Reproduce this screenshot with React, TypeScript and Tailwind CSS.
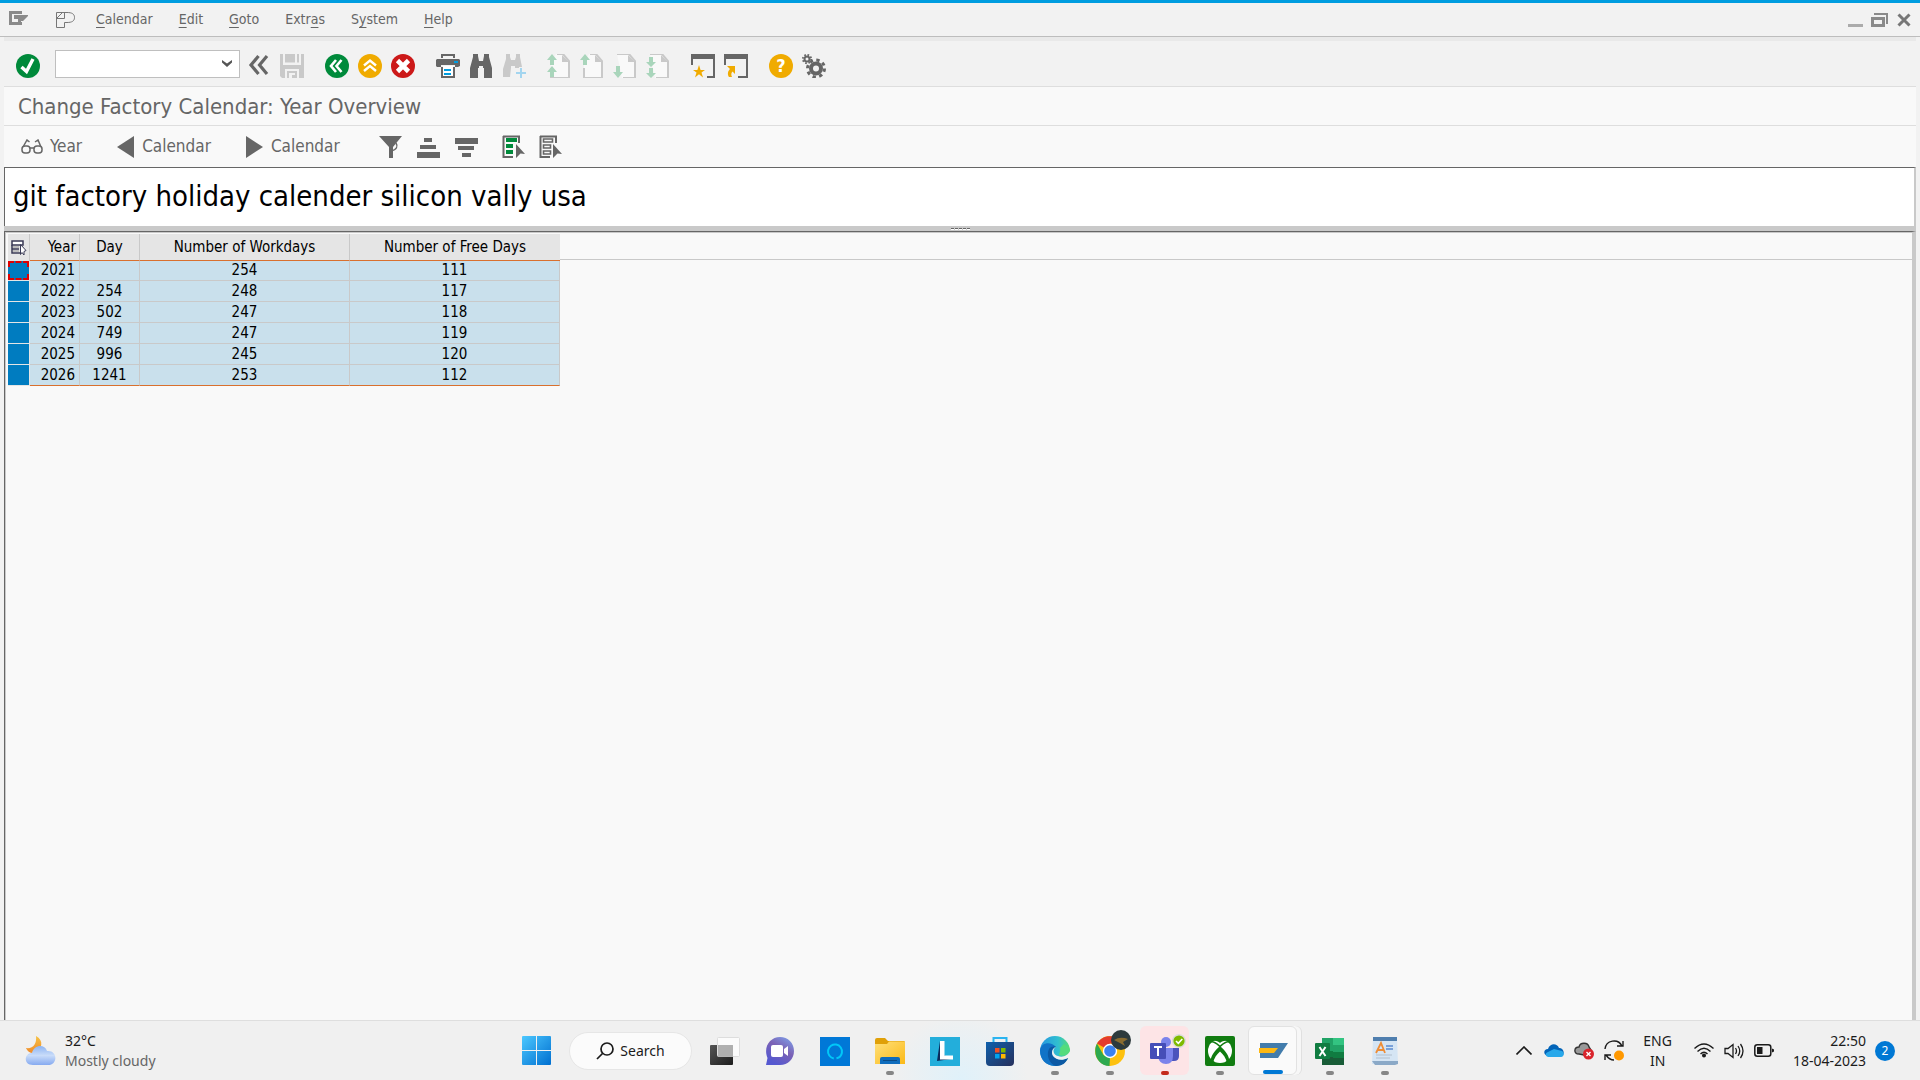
import type { ReactNode } from "react";

const G = "#666666";

type BtnProps = { label: string; children: ReactNode; disabled?: boolean };

function ToolButton({ label, children, disabled }: BtnProps) {
  return (
    <button type="button" aria-label={label} disabled={disabled} className="flex h-6 w-6 shrink-0 items-center justify-center">
      {children}
    </button>
  );
}

function Icon({ children, size = 24 }: { children: ReactNode; size?: number }) {
  return (
    <svg width={size} height={size} viewBox="0 0 24 24" fill="none" aria-hidden="true">
      {children}
    </svg>
  );
}

const menus: [string, string, string][] = [
  ["", "C", "alendar"],
  ["", "E", "dit"],
  ["", "G", "oto"],
  ["Extr", "a", "s"],
  ["S", "y", "stem"],
  ["", "H", "elp"],
];

function MenuBar() {
  return (
    <header className="flex h-[37px] shrink-0 items-center border-t-3 border-b border-t-[#009de0] border-b-[#bdbdbd] bg-[#f2f2f2] pl-2 pr-2 text-[14px] text-[#666]">
      <button type="button" aria-label="Window menu" className="mb-1">
        <svg width="20" height="16" viewBox="0 0 20 16" aria-hidden="true">
          <path d="M1 1H14V4H4V12H14V15H1Z" fill="#8a8a8a" />
          <path d="M6 5H20V6L15 11H13V12H10V9H6Z" fill="#8a8a8a" />
        </svg>
      </button>
      <button type="button" aria-label="Personal menu" className="ml-[27px] mr-5">
        <svg width="21" height="18" viewBox="0 0 21 18" fill="none" stroke="#777" aria-hidden="true">
          <path d="M1.5 1.5H12C17 1.5 19.5 3 19.5 6.500S17 11.500 12 11.500H9.500V16.500H1.500Z M9.500 1.500V7.500H1.500L7.500 1.500" />
        </svg>
      </button>
      <nav className="flex gap-[26px]">
        {menus.map(([a, u, b]) => (
          <button type="button" key={a + u + b}>
            {a}
            <span className="underline underline-offset-3">{u}</span>
            {b}
          </button>
        ))}
      </nav>
      <div className="ml-auto flex items-center gap-2">
        <button type="button" aria-label="Minimize">
          <svg width="15" height="16" viewBox="0 0 15 16" aria-hidden="true"><path d="M0 12H15V15H0Z" fill="#ababab" /></svg>
        </button>
        <button type="button" aria-label="Restore">
          <svg width="18" height="16" viewBox="0 0 18 16" aria-hidden="true">
            <path d="M3 1H17V12H15V3H3Z" fill="#8a8a8a" />
            <path d="M1.500 6.500H12.500V13.500H1.500Z" fill="none" stroke="#8a8a8a" strokeWidth="3" />
          </svg>
        </button>
        <button type="button" aria-label="Close">
          <svg width="15" height="16" viewBox="0 0 15 16" aria-hidden="true"><path d="M1.500 2.500L12.500 13.500M12.500 2.500L1.500 13.500" stroke="#777" strokeWidth="3" /></svg>
        </button>
      </div>
    </header>
  );
}

const pageButtons: [string, string][] = [
  ["First page", "M5 0L10 6H7V11H3V6H0ZM5 12L10 18H7V23H3V18H0Z"],
  ["Previous page", "M5 0L10 6H7V11H3V6H0Z"],
  ["Next page", "M5 24L10 18H7V12H3V18H0Z"],
  ["Last page", "M5 13L10 8H7V3H3V8H0ZM5 24L10 19H7V14H3V19H0Z"],
];

function StandardToolbar() {
  return (
    <div className="flex h-[45px] shrink-0 items-center gap-[21px] bg-[#f2f2f2] pl-3 pt-1">
      <div className="flex items-center gap-[7px]">
        <ToolButton label="Enter">
          <Icon><circle cx="12" cy="12" r="12" fill="#008a3b" /><path d="M5.500 13L10.500 17.500L17 5" stroke="#fff" strokeWidth="3.400" /></Icon>
        </ToolButton>
        <div className="relative mb-1 ml-2 flex">
          <select aria-label="Command" className="h-7 w-[185px] appearance-none border border-[#bfbfbf] bg-white text-sm" />
          <svg width="10" height="8" viewBox="0 0 10 8" className="pointer-events-none absolute right-2 top-2.5" aria-hidden="true"><path d="M0 0L5 3.500L10 0V2.500L5 7L0 2.500Z" fill="#555" /></svg>
        </div>
        <div className="flex gap-[9px]">
          <ToolButton label="Hide command field">
            <Icon><path d="M11.500 2L4 11L11.500 20M20 2L12.500 11L20 20" stroke={G} strokeWidth="3.200" /></Icon>
          </ToolButton>
          <ToolButton label="Save" disabled>
            <Icon><path d="M0 0H3V11H21V0H24V24H19V15H5V24H2L0 22Z" fill="#c9c9c9" /><path d="M5 0H15V8.500H5ZM17 0H19V8.500H17ZM7 17H17V24H7Z" fill="#c9c9c9" /><path d="M9 19H15V21H12V24H9Z" fill="#f2f2f2" /></Icon>
          </ToolButton>
        </div>
      </div>
      <div className="flex gap-[9px]">
        <ToolButton label="Back">
          <Icon><circle cx="12" cy="12" r="12" fill="#008a3b" /><path d="M11 6L6 12L11 18M16.500 6L11.500 12L16.500 18" stroke="#fff" strokeWidth="2.600" /></Icon>
        </ToolButton>
        <ToolButton label="Exit">
          <Icon><circle cx="12" cy="12" r="12" fill="#f0ab00" /><path d="M6 11.500L12 6.500L18 11.500M6 17L12 12L18 17" stroke="#fff" strokeWidth="2.400" /></Icon>
        </ToolButton>
        <ToolButton label="Cancel">
          <Icon><circle cx="12" cy="12" r="12" fill="#cc1919" /><path d="M6.500 6.500L17.500 17.500M17.500 6.500L6.500 17.500" stroke="#fff" strokeWidth="4.600" /></Icon>
        </ToolButton>
      </div>
      <div className="flex gap-[9px]">
        <ToolButton label="Print">
          <Icon><path d="M5 0H19V4H17V2H7V4H5ZM1 5H23L24 6V12L22 13H19V11H5V13H1L0 12V6Z" fill={G} /><path d="M5 13H7V22H17V13H19V24H5Z" fill={G} /><path d="M7 12H17V22H7Z" fill="#fff" /><path d="M18 7H22V9H18ZM8 15H15V17H8ZM8 19H15V21H8Z" fill="#009de0" /></Icon>
        </ToolButton>
        <ToolButton label="Find">
          <Icon><path d="M4 0H9V2L10 7H14L15 2V0H20V3L23 14V24H15V14H14V12H10V14H9V24H1V14L4 3Z" fill={G} /></Icon>
        </ToolButton>
        <ToolButton label="Find next" disabled>
          <Icon><path d="M4 0H8V3L9 6H13L14 3V0H18V3L20 13H17V14H13V12H9V14L8 23H1V15L4 5Z" fill="#c9c9c9" /><path d="M19 14V24M14 19H24" stroke="#a3d5ef" strokeWidth="2" /></Icon>
        </ToolButton>
      </div>
      <div className="flex gap-[9px]">
        {pageButtons.map(([label, arrows], i) => (
          <ToolButton key={label} label={label} disabled>
            <Icon>
              <path d={i < 2 ? "M9 0H16L22 7V24H4V9Z" : "M4 0H16L22 7V24H9Z"} fill="#f9f9f9" />
              <path d={i < 2 ? "M10 0H16L22 7V24H4V14" : "M4 0H16L22 7V24H10"} stroke="#c9c9c9" strokeWidth="2" />
              <path d="M15 1V8H22Z" fill="#c9c9c9" />
              <path d={arrows} fill="#a9d5bb" />
            </Icon>
          </ToolButton>
        ))}
      </div>
      <div className="flex gap-[9px]">
        <ToolButton label="New window">
          <Icon><path d="M0 0H24V24H16V22H22V5H2V11H0Z" fill={G} /><path d="M8 11L9.600 16H14L10.500 18.500L12 23.500L8 20.300L4 23.500L5.500 18.500L2 16H6.400Z" fill="#f0ab00" /></Icon>
        </ToolButton>
        <ToolButton label="Create shortcut">
          <Icon><path d="M0 0H24V24H14V22H22V5H2V11H0Z" fill={G} /><path d="M3 12H11V20L8.500 17.500C7 19 7 21 8 23H5C3 20 4 17 6 15Z" fill="#f0ab00" /></Icon>
        </ToolButton>
      </div>
      <div className="flex gap-[9px]">
        <ToolButton label="Help">
          <span className="flex h-6 w-6 items-center justify-center rounded-full bg-[#f0ab00] text-[18px] font-bold text-white">?</span>
        </ToolButton>
        <ToolButton label="Customize layout">
          <Icon>
            <circle cx="14" cy="14.500" r="5" stroke={G} strokeWidth="4" />
            <circle cx="14" cy="14.500" r="8.500" stroke={G} strokeWidth="3" strokeDasharray="3.340 3.340" />
            <circle cx="5" cy="5" r="2.500" stroke={G} strokeWidth="2" />
            <circle cx="5" cy="5" r="4.200" stroke={G} strokeWidth="1.800" strokeDasharray="1.650 1.650" />
          </Icon>
        </ToolButton>
      </div>
    </div>
  );
}

function ListSelectIcon({ filled }: { filled: boolean }) {
  return (
    <Icon>
      <path d="M1.500 1V22H11M1 1.500H17V8" stroke={G} strokeWidth="2" />
      {filled ? (
        <path d="M4 3H15V7H4ZM4 9H11V13H4ZM4 15H11V19H4Z" fill="#008a3b" />
      ) : (
        <path d="M4.500 4H13.500V7H4.500ZM4.500 10H11.500V13H4.500ZM4.500 16H11.500V19H4.500Z" stroke={G} strokeWidth="1.600" />
      )}
      <path d="M14 9L23 19L18.500 18.500L14 23Z" fill={G} />
    </Icon>
  );
}

function ApplicationToolbar() {
  return (
    <div className="flex h-[41px] shrink-0 items-center bg-[#f9f9f9] pl-[17px] text-[17px] text-[#666]">
      <button type="button" className="flex items-center gap-[7px]">
        <svg width="22" height="16" viewBox="0 0 22 16" fill="none" stroke={G} strokeWidth="1.500" aria-hidden="true">
          <rect x="1" y="7" width="8" height="7" rx="3" /><rect x="13" y="7" width="8" height="7" rx="3" />
          <path d="M9 9H13M2 8L6 1L8.500 3M20 8L17 1L14 3" />
        </svg>
        Year
      </button>
      <button type="button" className="ml-[35px] flex items-center gap-[8px]">
        <svg width="17" height="22" viewBox="0 0 17 22" aria-hidden="true"><path d="M17 0V22L0 11Z" fill={G} /></svg>
        Calendar
      </button>
      <button type="button" className="ml-[35px] flex items-center gap-[8px]">
        <svg width="17" height="22" viewBox="0 0 17 22" aria-hidden="true"><path d="M0 0V22L17 11Z" fill={G} /></svg>
        Calendar
      </button>
      <div className="ml-[38px] flex gap-[14px]">
        <ToolButton label="Filter"><Icon><path d="M1 1H24L15 12V23H11V12Z" fill={G} /><path d="M13 16C19 15 20 11 18 8" stroke={G} strokeWidth="1.400" /></Icon></ToolButton>
        <ToolButton label="Sort ascending"><Icon><path d="M8 3H16V7H8ZM4 10H20V14H4ZM1 17H24V23H1Z" fill={G} /></Icon></ToolButton>
        <ToolButton label="Sort descending"><Icon><path d="M1 3H24V9H1ZM4 11H20V15H4ZM8 18H17V22H8Z" fill={G} /></Icon></ToolButton>
      </div>
      <div className="ml-[24px] flex gap-[13px]">
        <ToolButton label="Select all"><ListSelectIcon filled /></ToolButton>
        <ToolButton label="Deselect all"><ListSelectIcon filled={false} /></ToolButton>
      </div>
    </div>
  );
}

const rows = [
  ["2021", "", "254", "111"],
  ["2022", "254", "248", "117"],
  ["2023", "502", "247", "118"],
  ["2024", "749", "247", "119"],
  ["2025", "996", "245", "120"],
  ["2026", "1241", "253", "112"],
];

function YearGrid() {
  return (
    <section className="min-h-0 flex-1 border-l border-r-4 border-t border-l-[#666] border-r-[#c9c9c9] border-t-[#666] bg-[#f9f9f9]">
      <div className="flex h-full items-start border-l border-t border-[#c9c9c9] pl-0.5 pt-px">
        <table className="w-[552px] shrink-0 table-fixed border-separate border-spacing-0 text-[15px] leading-none text-black">
          <colgroup>
            <col className="w-[22px]" /><col className="w-[50px]" /><col className="w-[60px]" /><col className="w-[210px]" /><col className="w-[210px]" />
          </colgroup>
          <thead>
            <tr className="h-[27px] bg-[#e5e5e5] [&>th]:p-0 [&>th]:font-normal">
              <th className="border-r border-[#c9c9c9]">
                <button type="button" aria-label="Select all rows" className="ml-[3px] flex">
                  <svg width="16" height="16" viewBox="0 0 16 16" fill="none" aria-hidden="true">
                    <path d="M1 1H12V5H1Z" fill="#fff" stroke="#3a3a55" strokeWidth="1.500" />
                    <path d="M2 6H8V8H2ZM2 10H8V12H2Z" fill="#bbb" />
                    <path d="M1 5V13H9M1 9H8" stroke="#3a3a55" strokeWidth="1.500" />
                    <path d="M9.500 4.500V14.500L11 12.500L13 15V11.500L15 10.500Z" fill="#fff" stroke="#3a3a55" />
                  </svg>
                </button>
              </th>
              <th className="border-b border-r border-b-[#d9702e] border-r-[#c9c9c9]"><span className="block pr-[3px] text-right">Year</span></th>
              <th className="border-b border-r border-b-[#d9702e] border-r-[#c9c9c9]">Day</th>
              <th className="border-b border-r border-b-[#d9702e] border-r-[#c9c9c9]">Number of Workdays</th>
              <th className="border-b border-b-[#d9702e]">Number of Free Days</th>
            </tr>
          </thead>
          <tbody className="[&_td]:border-b [&_td]:border-r [&_td]:border-[#c9c9c9] [&_td]:bg-[#c9e0ec] [&_td]:p-0 [&_td]:text-center [&>tr:last-child>td]:border-b-[#d9702e]">
            {rows.map(([year, day, work, free], i) => (
              <tr key={year} className={i === 0 ? "h-5" : "h-[21px]"}>
                <th className="border-b border-r border-[#e5e5e5] bg-[#007cc0] p-0">
                  {i === 0 && <span className="block h-[19px] border-2 border-dashed border-[#e00000]" />}
                </th>
                <td>
                  <span className="block pr-1 text-right">{year}</span>
                </td>
                <td>{day}</td>
                <td>{work}</td>
                <td>{free}</td>
              </tr>
            ))}
          </tbody>
        </table>
        <div className="h-[26px] flex-1 border-b border-[#c9c9c9]" />
      </div>
    </section>
  );
}

function AppSvg({ children }: { children: ReactNode }) {
  return <svg width="30" height="30" viewBox="0 0 30 30" fill="none" aria-hidden="true">{children}</svg>;
}

type TaskbarApp = { name: string; icon: ReactNode; dot?: "gray" | "red" | "blue"; tile?: string };

const apps: TaskbarApp[] = [
  {
    name: "Task view",
    icon: <AppSvg><rect x="0" y="9" width="23" height="20" rx="1" fill="url(#tv)" /><rect x="7.500" y="1.500" width="22" height="19" rx="1" fill="#fff" fillOpacity=".7" stroke="#ddd" /><path d="M8 9H23V21H8Z" fill="#aaa" fillOpacity=".8" /></AppSvg>,
  },
  {
    name: "Chat",
    icon: <AppSvg><path d="M15 1C23 1 29 7 29 15S23 29 15 29H1L2.500 22C-2 11 5 1 15 1Z" fill="url(#chat)" /><rect x="6" y="9" width="12" height="12" rx="2" fill="#fff" /><path d="M19 13L23 10V20L19 17Z" fill="#fff" /></AppSvg>,
  },
  {
    name: "Alexa",
    icon: <AppSvg><path d="M0 1H30V30H0Z" fill="#0078d7" /><circle cx="15" cy="15.500" r="7" stroke="#00c8f8" strokeWidth="2" strokeDasharray="41 3" transform="rotate(100 15 15.500)" /></AppSvg>,
  },
  {
    name: "File Explorer",
    dot: "gray",
    icon: <AppSvg><path d="M0 4Q0 2 2 2H10L13 5H29Q30 5 30 7V20H0Z" fill="#e0a008" /><path d="M0 8H12L14 5.500H30V28H0Z" fill="url(#folder)" /><path d="M5 28V23Q5 21 7 21H23Q25 21 25 23V28Z" fill="#0f6cbd" /><path d="M8 24.500H22" stroke="#0a4a86" /></AppSvg>,
  },
  {
    name: "Lenovo Vantage",
    icon: <AppSvg><path d="M0 1H30V30H0Z" fill="#23aedb" /><path d="M10 5L7 25L21 23L12 18Z" fill="#0b2a5b" /><path d="M10 5H14.500V19.500H23V23.500H10Z" fill="#fff" /></AppSvg>,
  },
  {
    name: "Microsoft Store",
    icon: <AppSvg><path d="M8.500 7V2H21.500V7" stroke="#2ab4f0" strokeWidth="2" /><path d="M1 6H29V26Q29 30 25 30H5Q1 30 1 26Z" fill="url(#store)" /><path d="M10 12H14.500V16.500H10Z" fill="#f25022" /><path d="M16 12H20.500V16.500H16Z" fill="#7fba00" /><path d="M10 18H14.500V22.500H10Z" fill="#00a4ef" /><path d="M16 18H20.500V22.500H16Z" fill="#ffb900" /></AppSvg>,
  },
  {
    name: "Edge",
    dot: "gray",
    icon: <AppSvg><circle cx="15" cy="15" r="15" fill="url(#edge)" /><path d="M0 14C2 5 12 6 16 11C11 11 10 16 13 20C16 25 23 25 28 22C24 29 18 30 14 30C6 29 0 24 0 14Z" fill="#1173c7" /><path d="M9 13C6 19 9 28 16 30C22 30 26 27 28 22C22 25 16 24 13 20C11 17 12 13 16 11C13 10 10 11 9 13Z" fill="#0c59a4" /><path d="M16 11C12 13 13 19 18 20C23 22 28 19 30 15V22L28 22C22 25 16 24 13 20C11 17 12 12 16 11Z" fill="#f1f1f1" /><path d="M20 12C21 16 19 17 19 19C24 21 30 17 30 13L24 8Z" fill="#54dc7c" /></AppSvg>,
  },
  {
    name: "Chrome",
    dot: "gray",
    icon: (
      <span className="relative flex">
        <AppSvg><circle cx="15" cy="15" r="15" fill="#fdc10f" /><path d="M15 15L2 7.500C7 -1 20 -3 28 7.500H15Z" fill="#e33b2e" /><path d="M2 7.500L8.500 19L15 22L14.500 30C3 30 -3 17 2 7.500Z" fill="#2da94f" /><circle cx="15" cy="15" r="7.200" fill="#fff" /><circle cx="15" cy="15" r="5.800" fill="#3b82f0" /></AppSvg>
        <svg width="20" height="20" viewBox="0 0 20 20" className="absolute -right-1.5 -top-1.5" aria-hidden="true"><circle cx="10" cy="10" r="10" fill="#2d3a3c" /><path d="M3 10Q9 6 17 9L12 12L14 16L9 13Z" fill="#8a6c2f" /></svg>
      </span>
    ),
  },
  {
    name: "Teams",
    dot: "red",
    tile: "bg-[#fde4e6]",
    icon: (
      <span className="relative flex">
        <AppSvg><circle cx="16" cy="6" r="5" fill="#7b83eb" /><path d="M22 12H29V20Q29 25 24 25H20Z" fill="#4b53bc" /><path d="M8 12H23V20Q23 28 16 28T8 20Z" fill="#7b83eb" /><rect x="0" y="7" width="16" height="16" rx="1" fill="#464eb8" /><path d="M4 11H12M8 11V20" stroke="#fff" strokeWidth="2" /></AppSvg>
        <svg width="14" height="14" viewBox="0 0 14 14" className="absolute -right-1.5 -top-0.5" aria-hidden="true"><circle cx="7" cy="7" r="6.300" fill="#7fba00" stroke="#ddd" strokeWidth="1.400" /><path d="M4 7L6.300 9.300L10.300 5" fill="none" stroke="#fff" strokeWidth="1.600" /></svg>
      </span>
    ),
  },
  {
    name: "Xbox",
    dot: "gray",
    icon: <AppSvg><rect width="30" height="30" rx="2" fill="#107c10" /><circle cx="15" cy="15" r="12" fill="#fff" /><path d="M7 5C11 4 14 6 15 7C16 6 19 4 23 5L22 3H8ZM15 10C20 14 25 21 24 25L22 27C21 22 18 18 15 15.500C12 18 9 22 8 27L6 25C5 21 10 14 15 10Z" fill="#107c10" /><path d="M6 6C9 5 12 8 15 10.500C18 8 21 5 24 6" stroke="#107c10" strokeWidth="1.500" /></AppSvg>,
  },
  {
    name: "SAP Logon",
    dot: "blue",
    tile: "-ml-1 border border-[#e2e2e2] bg-[#fafafa] shadow-[4px_0_0_#f7f7f7,5px_0_0_#e0e0e0]",
    icon: <AppSvg><path d="M2 7H30L20 22H2Z" fill="#427cac" /><path d="M1 12H20L16 17H1Z" fill="#fdb813" /></AppSvg>,
  },
  {
    name: "Excel",
    dot: "gray",
    icon: <AppSvg><path d="M7 2H29V29H7Z" fill="#185c37" /><path d="M7 2H18V15H7Z" fill="#21a366" /><path d="M18 2H29V9H18Z" fill="#33c481" /><path d="M18 9H29V16H18Z" fill="#21a366" /><path d="M7 15H18V21H7ZM18 16H29V22H18Z" fill="#107c41" /><rect x="0" y="7" width="15" height="16" rx="1" fill="#107c41" /><path d="M4.500 11L10.500 20M10.500 11L4.500 20" stroke="#fff" strokeWidth="2" /></AppSvg>,
  },
  {
    name: "WordPad",
    dot: "gray",
    icon: <AppSvg><path d="M3 1H27L28 28H2Z" fill="#d5e5f4" /><path d="M3 1H27V5H3Z" fill="#4f7eae" /><path d="M2 25H28V28L25 29H5Z" fill="#8ba9c7" /><path d="M6 17L11 7L15 17M8 14H14" stroke="#ee8d36" strokeWidth="1.800" /><path d="M16 10H23M16 13H23" stroke="#5b8bd0" strokeWidth="1.500" /><path d="M6 19H22M6 22H20" stroke="#b2bfcd" /></AppSvg>,
  },
];

function Taskbar() {
  return (
    <footer className="grid h-[60px] shrink-0 grid-cols-[1fr_auto_1fr] items-center border-t border-[#dedede] bg-[#f0f0f0] bg-[radial-gradient(circle_at_50%_100%,#dff1fa_0,#f0f0f0_7%)] font-['Noto_Sans','Open_Sans',sans-serif] text-[14px] leading-5 text-[#1b1b1b]">
      <svg width="0" height="0" className="absolute" aria-hidden="true">
        <defs>
          <linearGradient id="win" x2="1" y2="1"><stop stopColor="#4cc8ff" /><stop offset="1" stopColor="#006fd0" /></linearGradient>
          <linearGradient id="tv" x2="1" y2="1"><stop stopColor="#555" /><stop offset="1" stopColor="#1c1c1c" /></linearGradient>
          <linearGradient id="chat" x1="1" x2=".4" y2="1"><stop stopColor="#7fa8f0" /><stop offset=".5" stopColor="#7b62b5" /><stop offset="1" stopColor="#5558d0" /></linearGradient>
          <linearGradient id="folder" x2="1" y2="1"><stop stopColor="#ffe07a" /><stop offset="1" stopColor="#fbb917" /></linearGradient>
          <linearGradient id="store" x2="1" y2="1"><stop stopColor="#0f60ac" /><stop offset="1" stopColor="#26305c" /></linearGradient>
          <linearGradient id="edge"><stop stopColor="#2695e0" /><stop offset=".6" stopColor="#30bfd0" /><stop offset="1" stopColor="#5ade70" /></linearGradient>
          <linearGradient id="cloud" x2="0" y2="1"><stop stopColor="#8db4f2" /><stop offset=".5" stopColor="#c9dcf9" /><stop offset="1" stopColor="#86aaf0" /></linearGradient>
          <linearGradient id="moon" x2="0" y2="1"><stop stopColor="#f6c244" /><stop offset="1" stopColor="#ef8b2c" /></linearGradient>
        </defs>
      </svg>
      <button type="button" className="flex items-center gap-[9px] pl-[25px] text-left">
        <svg width="31" height="30" viewBox="0 0 31 30" aria-hidden="true">
          <path d="M11 0C19 4 18 14 8 17C5 17 2 15 1 12C8 13 12 8 11 0Z" fill="url(#moon)" />
          <path d="M8 29C-2 29 -1 17 7 17C9 8 20 8 22 15C33 14 33 29 23 29Z" fill="url(#cloud)" />
        </svg>
        <span>32°C<br /><span className="text-[#666]">Mostly cloudy</span></span>
      </button>
      <div className="flex items-center pl-[14px]">
        <button type="button" aria-label="Start" className="mr-[18px]">
          <svg width="29" height="29" viewBox="0 0 29 29" aria-hidden="true"><path d="M0 1Q0 0 1 0H14V14H0ZM15 0H28Q29 0 29 1V14H15ZM0 15H14V29H1Q0 29 0 28ZM15 15H29V28Q29 29 28 29H15Z" fill="url(#win)" /></svg>
        </button>
        <button type="button" className="mr-[5px] flex h-[38px] w-[123px] items-center justify-center gap-[6px] rounded-full border border-[#e6e6e6] bg-[#fbfbfb]">
          <svg width="18" height="18" viewBox="0 0 18 18" fill="none" stroke="#1b1b1b" strokeWidth="1.700" aria-hidden="true"><circle cx="11" cy="7" r="6" /><path d="M6.500 11.500L1 17" /></svg>
          Search
        </button>
        {apps.map((a) => (
          <div key={a.name} className="flex w-[55px] justify-center">
            <button type="button" aria-label={a.name} className={"relative flex h-[49px] w-[49px] items-center justify-center rounded-md " + (a.tile ?? "")}>
              {a.icon}
              {a.dot === "gray" && <span className="absolute bottom-0 h-1 w-2 rounded-full bg-[#868686]" />}
              {a.dot === "red" && <span className="absolute bottom-0 h-1 w-2 rounded-full bg-[#c42b1c]" />}
              {a.dot === "blue" && <span className="absolute bottom-0 h-1 w-5 rounded-full bg-[#0078d4]" />}
            </button>
          </div>
        ))}
      </div>
      <div className="flex items-center justify-end pr-[25px]">
        <button type="button" aria-label="Show hidden icons" className="mr-3"><svg width="16" height="9" viewBox="0 0 16 9" fill="none" stroke="#1b1b1b" strokeWidth="1.600" aria-hidden="true"><path d="M.5 8.500L8 1L15.500 8.500" /></svg></button>
        <button type="button" aria-label="OneDrive" className="mr-[10px]"><svg width="20" height="13" viewBox="0 0 20 13" aria-hidden="true"><path d="M4 12C-1 11 -1 5 4 5C6 -1 13 -1 15 4C20 4 21 10 18 12Z" fill="#0364b8" /><path d="M4 13C1 12 1 9 4 8L10 5L18 7C21 9 20 13 17 13Z" fill="#28a8ea" /></svg></button>
        <button type="button" aria-label="Cloud sync error" className="mr-[10px]"><svg width="20" height="18" viewBox="0 0 20 18" aria-hidden="true"><path d="M5 12C-1 12 0 5 5 5C6 0 14 0 15 5L17 8L10 13Z" fill="#999" stroke="#333" strokeWidth="1.400" /><circle cx="14.500" cy="12" r="5.500" fill="#d9242c" /><path d="M12.500 10L16.500 14M16.500 10L12.500 14" stroke="#fff" strokeWidth="1.400" /></svg></button>
        <button type="button" aria-label="Windows Update" className="mr-[19px]"><svg width="20" height="21" viewBox="0 0 20 21" fill="none" aria-hidden="true"><path d="M1 9C2 0 14 -2 18 6M19 1V6H13M10 20C6 20 4 18 2 15M1 20V15H7" stroke="#1b1b1b" strokeWidth="1.400" /><circle cx="15" cy="15.500" r="5" fill="#ff9800" /></svg></button>
        <button type="button" className="mr-[22px] text-center">ENG<br />IN</button>
        <button type="button" aria-label="Network, volume and battery" className="mr-[19px] flex items-center gap-[10px]">
          <svg width="20" height="15" viewBox="0 0 20 15" fill="none" stroke="#1b1b1b" strokeWidth="1.400" aria-hidden="true"><path d="M.5 5.500Q10 -3.500 19.500 5.500M3.500 8.500Q10 2 16.500 8.500M6.500 11Q10 7.500 13.500 11" /><circle cx="10" cy="12.500" r="1.300" fill="#1b1b1b" /></svg>
          <svg width="20" height="16" viewBox="0 0 20 16" fill="none" stroke="#1b1b1b" strokeWidth="1.300" aria-hidden="true"><path d="M1 5.500H4L9 1.500V14.500L4 10.500H1ZM11.500 5Q13.500 8 11.500 11M14 3Q17.500 8 14 13M16.500 1Q21.500 8 16.500 15" /></svg>
          <svg width="20" height="13" viewBox="0 0 20 13" fill="none" aria-hidden="true"><rect x=".8" y=".8" width="16" height="11.400" rx="2.500" stroke="#1b1b1b" strokeWidth="1.500" /><path d="M3 3H8.500V10H3ZM18 4.500L20 5.500V7.500L18 8.500Z" fill="#1b1b1b" /></svg>
        </button>
        <button type="button" className="mr-[9px] text-right">22:50<br />18-04-2023</button>
        <button type="button" aria-label="2 notifications" className="flex h-5 w-5 items-center justify-center rounded-full bg-[#0078d4] text-[12px] text-white">2</button>
      </div>
    </footer>
  );
}

export default function App() {
  return (
    <div className="flex h-screen flex-col bg-[#f2f2f2] font-['DejaVu_Sans_Condensed','DejaVu_Sans',sans-serif]">
      <MenuBar />
      <main className="mx-1 flex min-h-0 flex-1 flex-col border-t-4 border-[#e9e9e9]">
        <StandardToolbar />
        <h1 className="flex h-10 shrink-0 items-center border-y border-[#dedede] bg-[#f9f9f9] pl-[14px] text-[22px] text-[#666]">Change Factory Calendar: Year Overview</h1>
        <ApplicationToolbar />
        <p className="flex h-[59px] shrink-0 items-center border-l border-r-2 border-t border-l-[#666] border-r-[#c9c9c9] border-t-[#666] bg-white pl-2 text-[29px] text-black">git factory holiday calender silicon vally usa</p>
        <div className="flex h-[5px] shrink-0 items-center justify-center gap-px bg-[#c9c9c9]">
          {[0, 1, 2, 3, 4].map((d) => (
            <span key={d} className="h-0.5 w-[3px] border-t border-[#666] bg-white" />
          ))}
        </div>
        <YearGrid />
      </main>
      <Taskbar />
    </div>
  );
}
